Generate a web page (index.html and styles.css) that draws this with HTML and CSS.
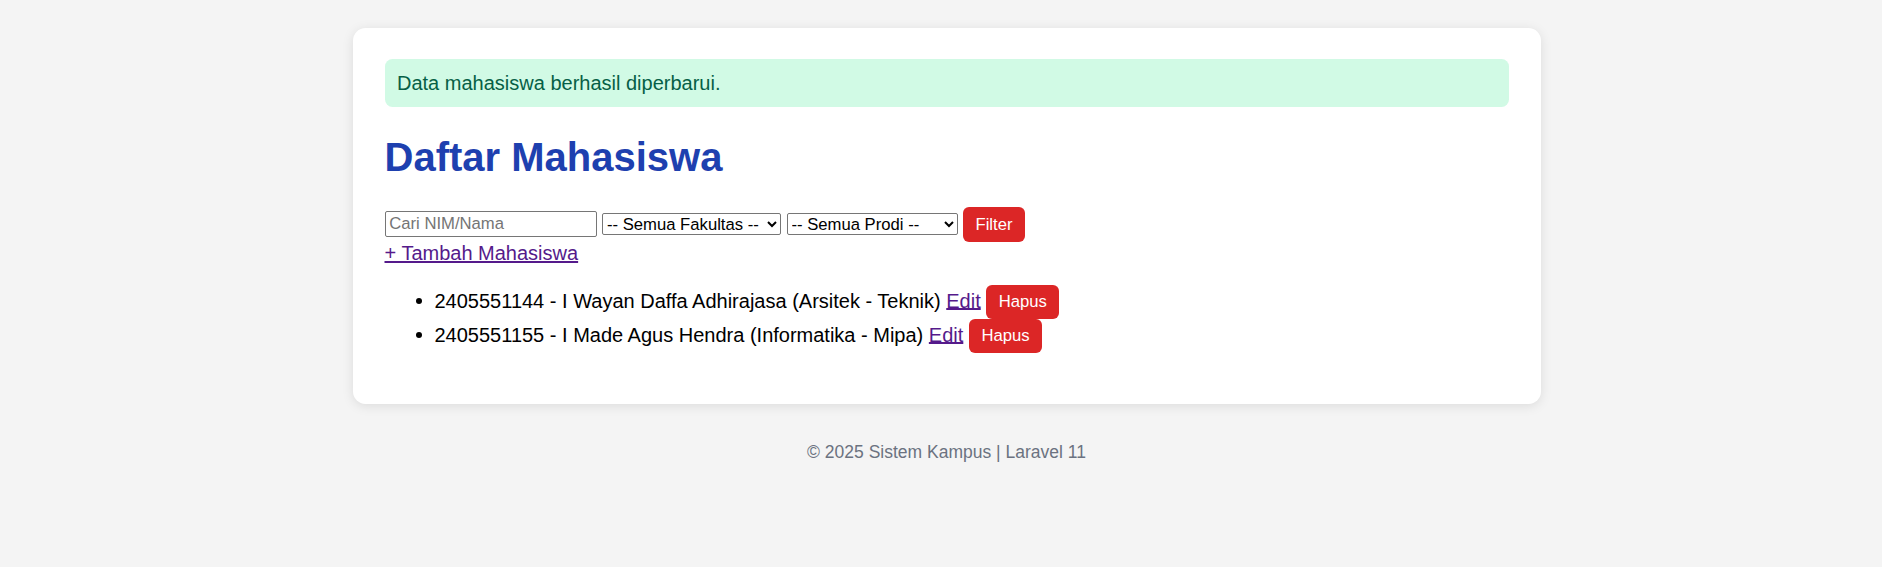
FILE: index.html
```html
<!DOCTYPE html>
<html lang="id">
<head>
<meta charset="utf-8">
<title>Daftar Mahasiswa</title>
<link rel="stylesheet" href="styles.css">
</head>
<body>
<div class="card">
  <div class="alert">Data mahasiswa berhasil diperbarui.</div>
  <h1 class="title">Daftar Mahasiswa</h1>
  <form class="filter">
    <input class="search" type="text" placeholder="Cari NIM/Nama">
    <select class="sel sel-fak">
      <option>-- Semua Fakultas --</option>
    </select>
    <select class="sel sel-prodi">
      <option>-- Semua Prodi --</option>
    </select>
    <button type="button" class="btn">Filter</button>
  </form>
  <div class="add"><a class="link" href="#">+ Tambah Mahasiswa</a></div>
  <ul class="list">
    <li>2405551144 - I Wayan Daffa Adhirajasa (Arsitek - Teknik) <a class="link" href="#">Edit</a> <button type="button" class="btn">Hapus</button></li>
    <li>2405551155 - I Made Agus Hendra (Informatika - Mipa) <a class="link" href="#">Edit</a> <button type="button" class="btn">Hapus</button></li>
  </ul>
</div>
<footer class="footer">© 2025 Sistem Kampus | Laravel 11</footer>
</body>
</html>
```

FILE: styles.css
```css
html, body {
  margin: 0;
}

body {
  padding: 28px 0 0 11px;
  background: #f4f4f4;
  font-family: "Liberation Sans", Arial, sans-serif;
  font-size: 20px;
  color: #000;
}

.card {
  box-sizing: border-box;
  width: 1188px;
  margin: 0 auto;
  padding: 31px 32px;
  background: #fff;
  border-radius: 12.5px;
  box-shadow: 0 2px 12px rgba(0, 0, 0, 0.1);
}

.alert {
  padding: 12.5px;
  line-height: 23px;
  background: #d1fae5;
  color: #065f46;
  border-radius: 7.5px;
}

.title {
  margin: 26.8px 0;
  font-size: 40px;
  line-height: 46px;
  font-weight: bold;
  color: #1e40af;
}

.filter {
  display: flex;
  align-items: center;
  gap: 5.5px;
  height: 35px;
  margin: 0;
}

.search {
  box-sizing: border-box;
  width: 212px;
  height: 26px;
  margin: 0;
  padding: 0 3.75px;
  border: 1px solid #767676;
  border-radius: 2px;
  font-family: "Liberation Sans", Arial, sans-serif;
  font-size: 16.67px;
  color: #000;
}

.search::placeholder {
  color: #757575;
}

.sel {
  box-sizing: border-box;
  height: 22.5px;
  margin: 0;
  border: 1px solid #767676;
  border-radius: 2px;
  background-color: #fff;
  font-family: "Liberation Sans", Arial, sans-serif;
  font-size: 16.67px;
  color: #000;
}

.sel-fak {
  width: 179px;
}

.sel-prodi {
  width: 171px;
}

.btn {
  display: inline-block;
  margin: 0;
  padding: 7.5px 12.5px;
  border: none;
  border-radius: 6px;
  background: #dc2626;
  color: #fff;
  font-family: "Liberation Sans", Arial, sans-serif;
  font-size: 16.67px;
  line-height: 19px;
}

.filter .btn {
  padding-top: 8px;
  padding-bottom: 8px;
}

.add {
  line-height: 23px;
}

.link {
  color: #551a8b;
  text-decoration: underline;
}

.list {
  margin: 20px 0;
  padding-left: 50px;
}

.footer {
  margin-top: 38.5px;
  text-align: center;
  color: #6b7280;
  font-size: 17.5px;
  line-height: 20px;
}
```
